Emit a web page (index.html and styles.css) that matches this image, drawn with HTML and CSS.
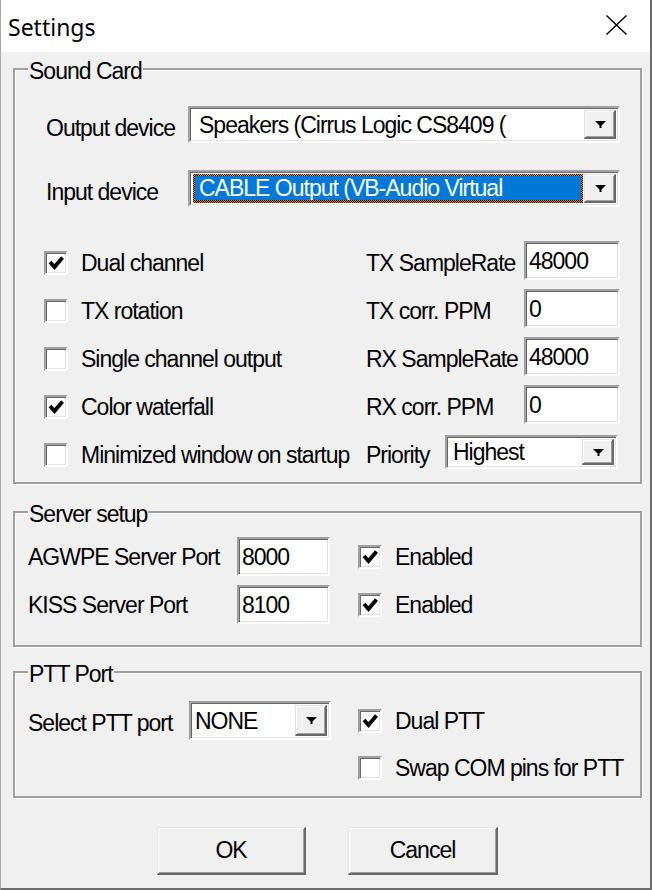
FILE: index.html
```html
<!DOCTYPE html>
<html>
<head>
<meta charset="utf-8">
<title>Settings</title>
<link rel="stylesheet" href="styles.css">
</head>
<body>
<div class="window">
  <div class="titlebar">
    <span class="title">Settings</span>
    <svg class="close" width="21" height="20" viewBox="0 0 21 20"><path d="M0.5 0.5L20.5 19.5M20.5 0.5L0.5 19.5" stroke="#000" stroke-width="1.4" fill="none"/></svg>
  </div>
  <div class="client">
    <fieldset class="group">
      <legend>Sound Card</legend>
      <div class="sound-body">
        <div class="device-row">
          <span class="device-label">Output device</span>
          <div class="combo combo-device">
            <div class="combo-field">Speakers (Cirrus Logic CS8409 (</div>
            <div class="combo-btn"><svg width="11" height="7" viewBox="0 0 11 7"><polygon points="0,0 11,0 6.5,4.5 6.5,7 4.5,7 4.5,4.5" fill="#000"/></svg></div>
          </div>
        </div>
        <div class="device-row device-row-2">
          <span class="device-label">Input device</span>
          <div class="combo combo-device">
            <div class="combo-field combo-selected"><div class="sel-fill">CABLE Output (VB-Audio Virtual</div></div>
            <div class="combo-btn"><svg width="11" height="7" viewBox="0 0 11 7"><polygon points="0,0 11,0 6.5,4.5 6.5,7 4.5,7 4.5,4.5" fill="#000"/></svg></div>
          </div>
        </div>
        <div class="sound-grid">
          <div class="check"><span class="box"><svg width="20" height="20" viewBox="0 0 20 20"><polyline points="4,9 8.5,14 16.5,4.5" fill="none" stroke="#000" stroke-width="3.8" stroke-linejoin="miter"/></svg></span><span>Dual channel</span></div>
          <span class="rlabel">TX SampleRate</span>
          <div class="edit">48000</div>

          <div class="check"><span class="box"></span><span>TX rotation</span></div>
          <span class="rlabel">TX corr. PPM</span>
          <div class="edit">0</div>

          <div class="check"><span class="box"></span><span>Single channel output</span></div>
          <span class="rlabel">RX SampleRate</span>
          <div class="edit">48000</div>

          <div class="check"><span class="box"><svg width="20" height="20" viewBox="0 0 20 20"><polyline points="4,9 8.5,14 16.5,4.5" fill="none" stroke="#000" stroke-width="3.8" stroke-linejoin="miter"/></svg></span><span>Color waterfall</span></div>
          <span class="rlabel">RX corr. PPM</span>
          <div class="edit">0</div>

          <div class="check"><span class="box"></span><span>Minimized window on startup</span></div>
          <span class="prio-label">Priority</span>
          <div class="combo combo-prio">
            <div class="combo-field">Highest</div>
            <div class="combo-btn"><svg width="11" height="7" viewBox="0 0 11 7"><polygon points="0,0 11,0 6.5,4.5 6.5,7 4.5,7 4.5,4.5" fill="#000"/></svg></div>
          </div>
        </div>
      </div>
    </fieldset>

    <fieldset class="group group-server">
      <legend>Server setup</legend>
      <div class="server-body">
        <span>AGWPE Server Port</span>
        <div class="edit">8000</div>
        <div class="check"><span class="box"><svg width="20" height="20" viewBox="0 0 20 20"><polyline points="4,9 8.5,14 16.5,4.5" fill="none" stroke="#000" stroke-width="3.8" stroke-linejoin="miter"/></svg></span><span>Enabled</span></div>

        <span>KISS Server Port</span>
        <div class="edit">8100</div>
        <div class="check"><span class="box"><svg width="20" height="20" viewBox="0 0 20 20"><polyline points="4,9 8.5,14 16.5,4.5" fill="none" stroke="#000" stroke-width="3.8" stroke-linejoin="miter"/></svg></span><span>Enabled</span></div>
      </div>
    </fieldset>

    <fieldset class="group group-ptt">
      <legend>PTT Port</legend>
      <div class="ptt-body">
        <span class="ptt-label">Select PTT port</span>
        <div class="combo combo-ptt">
          <div class="combo-field">NONE</div>
          <div class="combo-btn"><svg width="11" height="7" viewBox="0 0 11 7"><polygon points="0,0 11,0 6.5,4.5 6.5,7 4.5,7 4.5,4.5" fill="#000"/></svg></div>
        </div>
        <div class="check"><span class="box"><svg width="20" height="20" viewBox="0 0 20 20"><polyline points="4,9 8.5,14 16.5,4.5" fill="none" stroke="#000" stroke-width="3.8" stroke-linejoin="miter"/></svg></span><span>Dual PTT</span></div>
        <div class="check check-swap"><span class="box"></span><span>Swap COM pins for PTT</span></div>
      </div>
    </fieldset>

    <div class="buttons">
      <button class="btn btn-ok">OK</button>
      <button class="btn btn-cancel">Cancel</button>
    </div>
  </div>
</div>
</body>
</html>
```
FILE: styles.css
```css
html, body {
  margin: 0;
  padding: 0;
  background: #f0f0f0;
}

.window {
  width: 652px;
  height: 890px;
  box-sizing: border-box;
  border-left: 1px solid #a8a8a8;
  border-right: 2px solid #6e6e6e;
  border-bottom: 2px solid #6e6e6e;
  display: flex;
  flex-direction: column;
  background: #f0f0f0;
  overflow: hidden;
}

.titlebar {
  height: 52px;
  flex: none;
  background: #ffffff;
  display: flex;
  align-items: center;
  justify-content: space-between;
  padding-left: 7px;
}

.title {
  font-family: "Noto Sans", "Open Sans", sans-serif;
  font-size: 23px;
  line-height: 30px;
  color: #000;
  padding-top: 2px;
}

.close {
  margin-right: 23px;
  margin-bottom: 2px;
}

.client {
  flex: 1;
  padding: 4px 8px 0 12px;
  font-family: "Liberation Sans", Arial, sans-serif;
  font-size: 23px;
  letter-spacing: -1px;
  line-height: 26px;
  color: #000;
  white-space: nowrap;
}

.group {
  margin: 0;
  padding: 0;
  min-width: 0;
  border: 2px solid #a0a0a0;
  box-shadow: 1px 1px 0 #ffffff, inset 1px 1px 0 #ffffff;
}

.group legend {
  margin-left: 13px;
  padding: 4px 1px 0;
  line-height: 22px;
  background: #f0f0f0;
}

.group-server {
  margin-top: 15px;
}

.group-ptt {
  margin-top: 12px;
}

.sound-body {
  padding: 24px 20px 3px 29px;
}

.device-row {
  display: flex;
  align-items: center;
}

.device-row-2 {
  margin-top: 27px;
}

.device-label {
  width: 144px;
  flex: none;
  box-sizing: border-box;
  padding-left: 2px;
  padding-top: 7px;
}

/* combo box */
.combo {
  display: flex;
  box-sizing: border-box;
  border: 2px solid;
  border-color: #a0a0a0 #ffffff #ffffff #a0a0a0;
  box-shadow: inset 1px 1px 0 #696969, inset -1px -1px 0 #e3e3e3;
  background: #ffffff;
  padding: 2px;
}

.combo-device {
  width: 432px;
  height: 37px;
}

.combo-field {
  flex: 1;
  min-width: 0;
  display: flex;
  align-items: center;
  padding-left: 7px;
  overflow: hidden;
}

.combo-selected {
  padding: 2px;
  margin: 0 1px;
  align-items: stretch;
  background: repeating-conic-gradient(#000000 0 25%, #f28a1e 0 50%) 0 0 / 2px 2px;
}

.sel-fill {
  flex: 1;
  background: #0078d7;
  color: #ffffff;
  padding-left: 4px;
  line-height: 24px;
  height: 24px;
  overflow: hidden;
}

.combo-btn {
  width: 32px;
  flex: none;
  box-sizing: border-box;
  background: #f0f0f0;
  border-style: solid;
  border-width: 1px 2px 2px 1px;
  border-color: #e3e3e3 #696969 #696969 #e3e3e3;
  box-shadow: inset 1px 1px 0 #ffffff, inset -1px -1px 0 #a0a0a0;
  display: flex;
  align-items: center;
  justify-content: center;
}

.combo-btn svg {
  margin-left: 1px;
  margin-top: 1px;
}

/* sound grid */
.sound-grid {
  display: grid;
  grid-template-columns: 322px 79px 79px 96px;
  grid-auto-rows: 48px;
  align-items: center;
  margin-top: 32px;
}

.rlabel {
  grid-column: 2 / span 2;
}

.sound-grid .edit {
  grid-column: 4;
  align-self: start;
  margin-top: 2px;
}

.prio-label {
  grid-column: 2;
}

.combo-prio {
  grid-column: 3 / span 2;
  width: 173px;
  height: 34px;
  align-self: start;
  margin-top: 4px;
}

.combo-prio .combo-field {
  padding-left: 4px;
}

/* edit box */
.edit {
  box-sizing: border-box;
  height: 39px;
  border: 2px solid;
  border-color: #a0a0a0 #ffffff #ffffff #a0a0a0;
  box-shadow: inset 1px 1px 0 #696969, inset -1px -1px 0 #e3e3e3;
  background: #ffffff;
  padding: 0 3px;
  display: flex;
  align-items: center;
  line-height: 22px;
}

/* checkbox */
.check {
  display: flex;
  align-items: center;
  gap: 13px;
}

.box {
  flex: none;
  width: 24px;
  height: 24px;
  box-sizing: border-box;
  border: 2px solid;
  border-color: #a0a0a0 #ffffff #ffffff #a0a0a0;
  box-shadow: inset 1px 1px 0 #696969, inset -1px -1px 0 #e3e3e3;
  background: #ffffff;
  display: flex;
}

/* server */
.server-body {
  padding: 12px 0 21px 13px;
  display: grid;
  grid-template-columns: 209px 93px auto;
  grid-auto-rows: 39px;
  row-gap: 9px;
  align-items: center;
}

.server-body .check {
  margin-left: 28px;
}

/* ptt */
.ptt-body {
  padding: 16px 0 16px 13px;
  display: grid;
  grid-template-columns: 161px 142px auto;
  grid-template-rows: 39px 24px;
  row-gap: 16px;
  align-items: center;
}

.ptt-label {
  padding-top: 5px;
}

.combo-ptt {
  width: 142px;
  height: 39px;
}

.combo-ptt .combo-field {
  padding-left: 2px;
}

.ptt-body .check {
  margin-left: 27px;
}

.check-swap {
  grid-column: 3;
  grid-row: 2;
}

/* buttons */
.buttons {
  display: flex;
  gap: 42px;
  margin: 29px 0 0 144px;
}

.btn {
  width: 149px;
  height: 48px;
  box-sizing: border-box;
  background: #f0f0f0;
  border-style: solid;
  border-width: 1px 2px 2px 1px;
  border-color: #e3e3e3 #696969 #696969 #e3e3e3;
  box-shadow: inset 1px 1px 0 #ffffff, inset -1px -1px 0 #a0a0a0;
  font-family: inherit;
  font-size: inherit;
  letter-spacing: inherit;
  color: #000;
  padding: 0;
  margin: 0;
}

.btn-cancel {
  width: 150px;
}
```
